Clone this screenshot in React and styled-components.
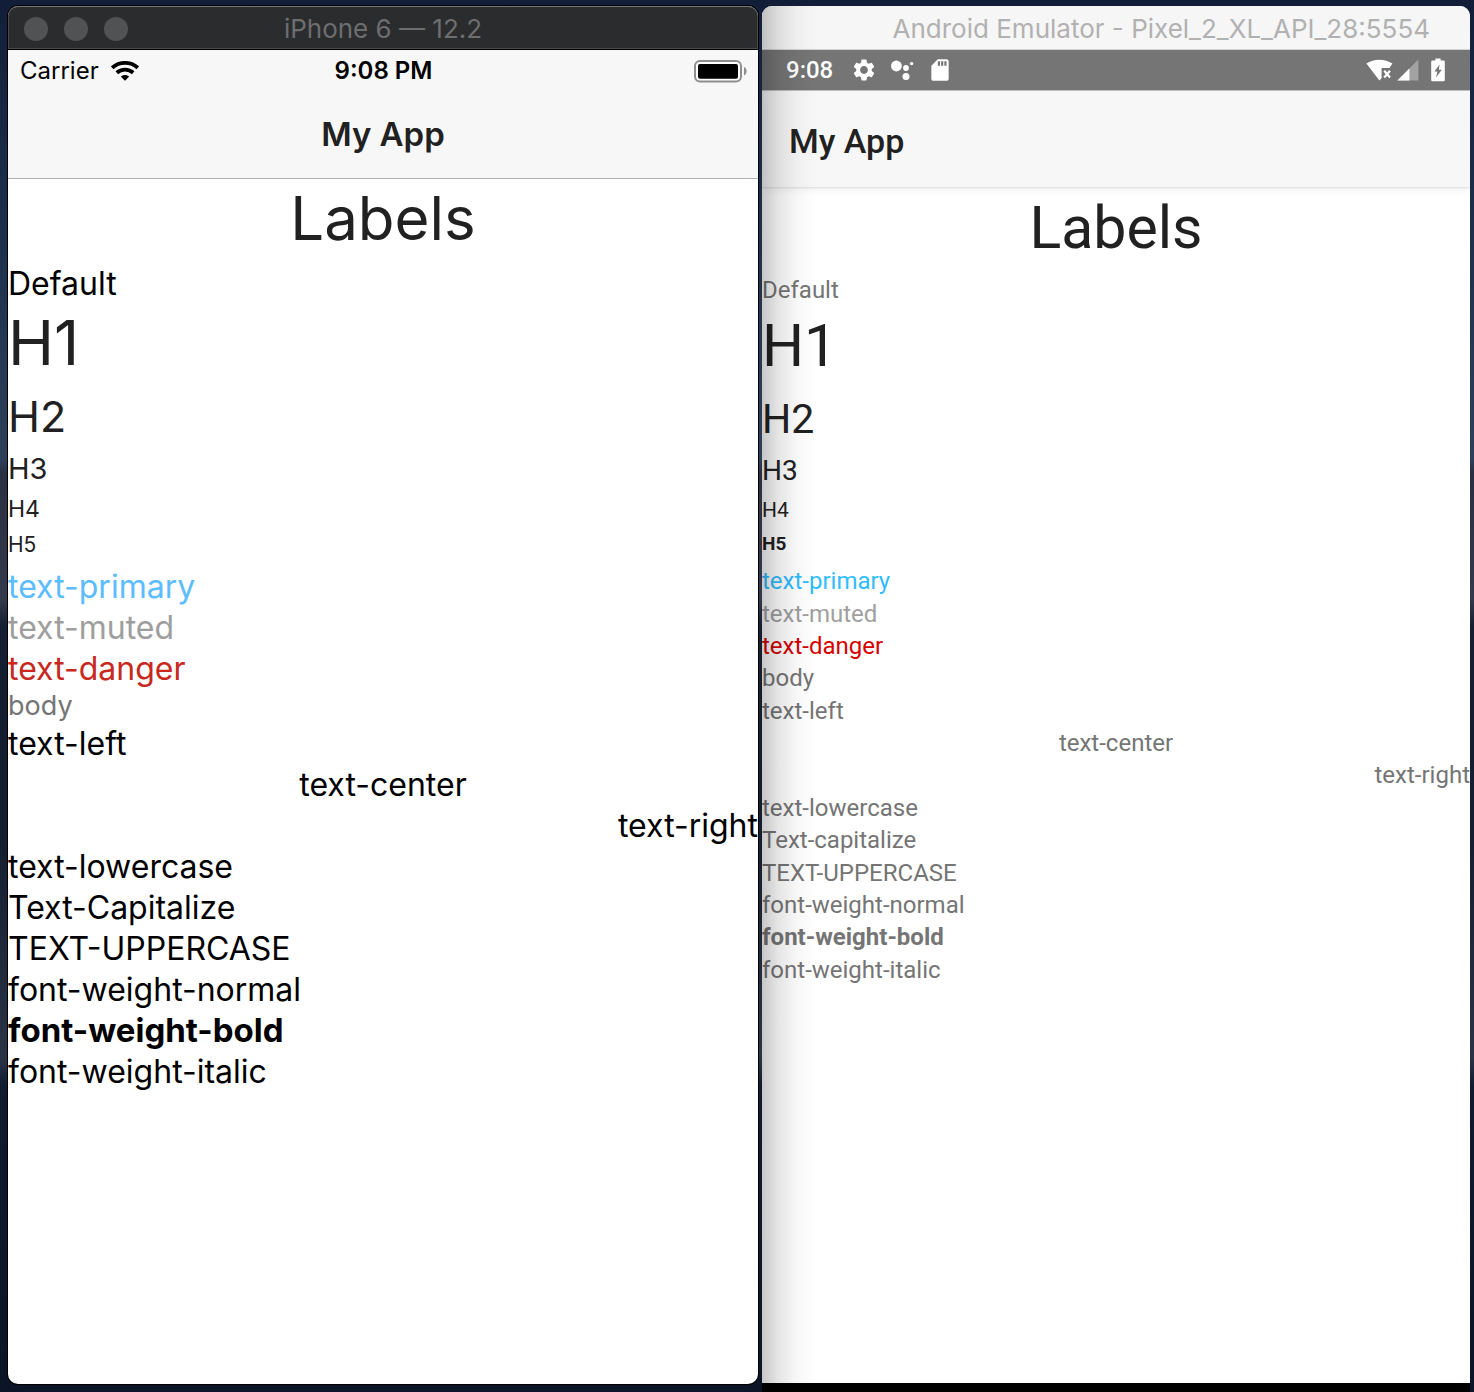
import React from "react";
import styled, { createGlobalStyle, css } from "styled-components";
import { MdSettings, MdSdCard } from "react-icons/md";

const GlobalStyle = createGlobalStyle`
  *, *::before, *::after { box-sizing: border-box; }
  html, body { margin: 0; background: #0c1628; }
`;

const Desktop = styled.main`
  min-height: 100vh;
  display: grid;
  grid-template-columns: 750fr 708fr;
  gap: 4px;
  padding: 6px 4px 0 8px;
  background: linear-gradient(
    180deg,
    #121e38 0%,
    #1a2b48 12%,
    #2d3f59 33%,
    #2a2f42 34%,
    #343a4c 43%,
    #161e32 45%,
    #151d31 60%,
    #2b3347 76%,
    #101b30 78%,
    #0b1527 100%
  );
`;

const Window = styled.section`
  position: relative;
  display: flex;
  flex-direction: column;
  overflow: hidden;
  background: #fff;
`;

const IosWindow = styled(Window)`
  margin-bottom: 8px;
  border-radius: 10px;
  box-shadow: 0 0 0 1px #000;
  font-family: Inter, "Liberation Sans", sans-serif;
`;

const AndroidWindow = styled(Window)`
  border-radius: 10px 10px 0 0;
  border-bottom: 9px solid #000;
  font-family: Roboto, "Liberation Sans", sans-serif;

  &::before {
    content: "";
    position: absolute;
    z-index: 1;
    inset: 0 auto 0 0;
    width: 54px;
    pointer-events: none;
    background: linear-gradient(
      90deg,
      rgba(0, 0, 0, 0.22),
      rgba(0, 0, 0, 0.1) 30%,
      rgba(0, 0, 0, 0.03) 65%,
      rgba(0, 0, 0, 0)
    );
  }
`;

const TitleBar = styled.header`
  height: 44px;
  display: grid;
  grid-template-columns: 1fr auto 1fr;
  align-items: center;
  padding: 2px 16px 0;
  font-family: Inter, "Liberation Sans", sans-serif;
  font-size: 26px;
  line-height: 30px;
  white-space: nowrap;
`;

const DarkTitleBar = styled(TitleBar)`
  color: #6d6e70;
  background: #2b2c2e;
  border-bottom: 1px solid #000;
  border-radius: 10px 10px 0 0;
  box-shadow: inset 0 2px 0 -1px #77787a, inset 0 0 0 1px #4a4b4d;
`;

const LightTitleBar = styled(TitleBar)`
  grid-template-columns: 1fr;
  justify-items: end;
  padding: 2px 40px 0;
  color: #b1b1b1;
  background: #f6f6f6;
  border-bottom: 1px solid #d2d2d2;
`;

const WindowTitle = styled.span``;

const Lights = styled.div`
  display: flex;
  gap: 16px;
`;

const Light = styled.button`
  width: 24px;
  height: 24px;
  padding: 0;
  border: 0;
  border-radius: 50%;
  background: #515254;
`;

const IosStatus = styled.div`
  height: 40px;
  display: grid;
  grid-template-columns: 1fr auto 1fr;
  align-items: center;
  padding: 1px 11px 0 12px;
  background: #f7f7f7;
  color: #000;
  font-size: 24px;
  line-height: 28px;
`;

const StatusGroup = styled.div`
  display: flex;
  align-items: center;
  gap: ${(p) => p.$gap || 12}px;
  justify-content: ${(p) => (p.$end ? "flex-end" : "flex-start")};
`;

const Clock = styled.time`
  font-weight: ${(p) => p.$weight};
`;

const IosNav = styled.div`
  height: 89px;
  display: flex;
  justify-content: center;
  align-items: center;
  background: #f7f7f7;
  border-bottom: 1px solid #b2b2b2;
`;

const AppName = styled.h1`
  margin: 0;
  color: #212121;
  font-size: ${(p) => p.$size}px;
  line-height: 40px;
  font-weight: ${(p) => p.$weight};
`;

const AndroidStatus = styled.div`
  height: 41px;
  display: flex;
  justify-content: space-between;
  align-items: center;
  padding: 0 25px 0 24px;
  background: #757575;
  border-bottom: 1px solid #c4c4c4;
  color: #fff;
  font-size: 24px;
  line-height: 28px;
`;

const AndroidBar = styled.div`
  position: relative;
  height: 96px;
  display: flex;
  align-items: center;
  padding: 4px 27px 0;
  background: #f7f7f7;
  box-shadow: 0 1px 2px rgba(0, 0, 0, 0.1), 0 3px 8px rgba(0, 0, 0, 0.06);
`;

const Content = styled.div`
  flex: 1;
  display: flex;
  flex-direction: column;
  padding-top: ${(p) => p.$top}px;
`;

const align = css`
  text-align: ${(p) => p.$align || "left"};
`;

const Heading = styled.h2`
  margin: 0 0 8px;
  color: #212121;
  font-size: ${(p) => p.$size}px;
  line-height: ${(p) => p.$line}px;
  font-weight: ${(p) => p.$weight || 400};
  ${align}
`;

const IosLabel = styled.p`
  margin: 0;
  color: ${(p) => p.$color || "#000"};
  font-size: ${(p) => (p.$small ? 27 : p.$weight ? 33 : 32)}px;
  line-height: ${(p) => (p.$small ? 34 : 41)}px;
  font-weight: ${(p) => p.$weight || 400};
  ${align}
`;

const AndroidLabel = styled.p`
  margin: 0;
  color: ${(p) => p.$color || "#757575"};
  font-size: 24px;
  line-height: 32px;
  font-weight: ${(p) => p.$weight || 400};
  ${align}
`;

const AndroidList = styled.div`
  height: 421px;
  display: grid;
  grid-template-rows: repeat(13, 1fr);
  align-items: center;
`;

const IosWifi = () => (
  <svg width="28" height="20" viewBox="0 0 28 20" aria-hidden="true">
    <g fill="none" stroke="#000" strokeWidth="3.8">
      <path d="M1.2 6.8 C8.4 0.2 19.6 0.2 26.8 6.8" />
      <path d="M5.8 11.8 C10.6 7.6 17.4 7.6 22.2 11.8" />
    </g>
    <path d="M9.8 15.6 C12.2 13.4 15.8 13.4 18.2 15.6 L14 19.8 Z" fill="#000" />
  </svg>
);

const IosBattery = () => (
  <svg width="54" height="24" viewBox="0 0 54 24" aria-hidden="true">
    <rect x="2" y="2" width="46" height="20.6" rx="5" fill="#fff" stroke="#8e8e8e" strokeWidth="2" />
    <rect x="5" y="5" width="40" height="14.8" rx="2" fill="#000" />
    <path d="M51 8 C54.4 9 54.4 15.4 51 16.4 Z" fill="#8e8e8e" />
  </svg>
);

const Dots = () => (
  <svg width="24" height="24" viewBox="0 0 24 24" fill="#fff" aria-hidden="true">
    <circle cx="6.4" cy="8" r="5.4" />
    <circle cx="16" cy="10" r="2.9" />
    <circle cx="21.6" cy="5.6" r="1.7" />
    <circle cx="16" cy="18.4" r="3.5" />
  </svg>
);

const WifiOff = () => (
  <svg width="27" height="24" viewBox="0 0 27 24" aria-hidden="true">
    <path d="M0.4 5.6 C7.6 0.4 19 0.4 26.4 5.6 L23.4 10 H15.6 V20 L13.4 22.6 Z" fill="#fff" />
    <path d="M18.2 12.8 L24 19.4 M24 12.8 L18.2 19.4" stroke="#fff" strokeWidth="2.2" />
  </svg>
);

const Signal = () => (
  <svg width="22" height="24" viewBox="0 0 22 24" aria-hidden="true">
    <path d="M0.4 22.6 L21.4 1.6 V22.6 Z" fill="#a3a3a3" />
    <path d="M0.4 22.6 L12.4 10.6 V22.6 Z" fill="#fff" />
  </svg>
);

const AndroidBattery = () => (
  <svg width="14" height="24" viewBox="0 0 14 24" aria-hidden="true">
    <path
      d="M4.4 0.4 H9.6 V2.6 H12.6 Q13.8 2.6 13.8 3.8 V22 Q13.8 23.2 12.6 23.2 H1.4 Q0.2 23.2 0.2 22 V3.8 Q0.2 2.6 1.4 2.6 H4.4 Z"
      fill="#fff"
    />
    <path d="M8.6 6.4 L3.4 13.6 H6.4 L5 19.6 L10.8 11.8 H7.8 Z" fill="#757575" />
  </svg>
);

const samples = [
  { text: "text-primary", ios: "#5bbcff", android: "#30bcff" },
  { text: "text-muted", ios: "#9e9e9e", android: "#a0a0a0" },
  { text: "text-danger", ios: "#c8281e", android: "#d50000" },
  { text: "body", ios: "#757575", small: true },
  { text: "text-left" },
  { text: "text-center", align: "center" },
  { text: "text-right", align: "right" },
  { text: "text-lowercase" },
  { text: "Text-Capitalize", androidText: "Text-capitalize" },
  { text: "TEXT-UPPERCASE" },
  { text: "font-weight-normal" },
  { text: "font-weight-bold", weight: 700 },
  { text: "font-weight-italic" },
];

const iosHeadings = [
  { text: "H1", as: "h1", size: 62, line: 78 },
  { text: "H2", as: "h2", size: 43, line: 52 },
  { text: "H3", as: "h3", size: 29, line: 38 },
  { text: "H4", as: "h4", size: 23, line: 27 },
  { text: "H5", as: "h5", size: 21, line: 27 },
];

const androidHeadings = [
  { text: "H1", as: "h1", size: 59, line: 80 },
  { text: "H2", as: "h2", size: 41, line: 50 },
  { text: "H3", as: "h3", size: 28, line: 38 },
  { text: "H4", as: "h4", size: 21, line: 25 },
  { text: "H5", as: "h5", size: 19, line: 26, weight: 700 },
];

const Headings = ({ items }) =>
  items.map((h) => (
    <Heading key={h.text} as={h.as} $size={h.size} $line={h.line} $weight={h.weight}>
      {h.text}
    </Heading>
  ));

const IosSimulator = () => (
  <IosWindow aria-label="iPhone simulator">
    <DarkTitleBar>
      <Lights>
        <Light aria-label="Close" />
        <Light aria-label="Minimize" />
        <Light aria-label="Zoom" />
      </Lights>
      <WindowTitle>iPhone 6 — 12.2</WindowTitle>
    </DarkTitleBar>
    <IosStatus>
      <StatusGroup>
        Carrier
        <IosWifi />
      </StatusGroup>
      <Clock $weight={600}>9:08 PM</Clock>
      <StatusGroup $end>
        <IosBattery />
      </StatusGroup>
    </IosStatus>
    <IosNav>
      <AppName $size={33} $weight={600}>
        My App
      </AppName>
    </IosNav>
    <Content $top={2}>
      <Heading $size={60} $line={74} $align="center">
        Labels
      </Heading>
      <IosLabel>Default</IosLabel>
      <Headings items={iosHeadings} />
      {samples.map((s) => (
        <IosLabel key={s.text} $color={s.ios} $small={s.small} $align={s.align} $weight={s.weight}>
          {s.text}
        </IosLabel>
      ))}
    </Content>
  </IosWindow>
);

const AndroidEmulator = () => (
  <AndroidWindow aria-label="Android emulator">
    <LightTitleBar>
      <WindowTitle>Android Emulator - Pixel_2_XL_API_28:5554</WindowTitle>
    </LightTitleBar>
    <AndroidStatus>
      <StatusGroup $gap={18}>
        <Clock $weight={500}>9:08</Clock>
        <StatusGroup $gap={13}>
          <MdSettings size={26} />
          <Dots />
          <MdSdCard size={26} />
        </StatusGroup>
      </StatusGroup>
      <StatusGroup $end $gap={12}>
        <StatusGroup $gap={4}>
          <WifiOff />
          <Signal />
        </StatusGroup>
        <AndroidBattery />
      </StatusGroup>
    </AndroidStatus>
    <AndroidBar>
      <AppName $size={34} $weight={500}>
        My App
      </AppName>
    </AndroidBar>
    <Content $top={3}>
      <Heading $size={59} $line={76} $align="center">
        Labels
      </Heading>
      <AndroidLabel>Default</AndroidLabel>
      <Headings items={androidHeadings} />
      <AndroidList>
        {samples.map((s) => (
          <AndroidLabel key={s.text} $color={s.android} $align={s.align} $weight={s.weight}>
            {s.androidText || s.text}
          </AndroidLabel>
        ))}
      </AndroidList>
    </Content>
  </AndroidWindow>
);

export default function App() {
  return (
    <>
      <GlobalStyle />
      <Desktop>
        <IosSimulator />
        <AndroidEmulator />
      </Desktop>
    </>
  );
}
